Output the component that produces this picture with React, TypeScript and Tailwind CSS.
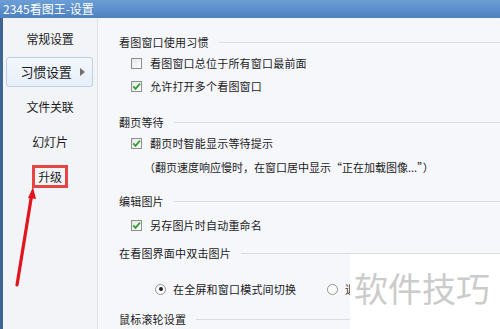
import React from 'react';

const font = { fontFamily: '"Noto Sans CJK SC", "Noto Sans", sans-serif' };

const Check: React.FC<{ checked?: boolean }> = ({ checked }) => (
  <span className="relative w-[11px] h-[11px] border border-[#8e8f8f] bg-gradient-to-br from-[#e6e6e6] to-white shrink-0">
    {checked && (
      <svg viewBox="0 0 11 11" className="absolute -left-px -top-px w-[11px] h-[11px]">
        <path d="M2.3 5.4 L4.5 7.9 L9 2.6" fill="none" stroke="#2f9e2f" strokeWidth="1.7" />
      </svg>
    )}
  </span>
);

const Radio: React.FC<{ on?: boolean }> = ({ on }) => (
  <span className="w-[11px] h-[11px] rounded-full border border-[#8f8f8f] bg-white flex items-center justify-center shrink-0">
    {on && <span className="w-[4px] h-[4px] rounded-full bg-[#222]" />}
  </span>
);

const Header: React.FC<{ text: string; mt: string }> = ({ text, mt }) => (
  <div className={`flex items-center h-[20px] pl-[21px] ${mt}`}>
    <span className="whitespace-nowrap">{text}</span>
    <span className="flex-1 h-px bg-[#d8dce3] ml-[10px]" />
  </div>
);

const Row: React.FC<{ text: string; checked?: boolean; mt: string }> = ({ text, checked, mt }) => (
  <div className={`flex items-center h-[20px] pl-[33px] gap-[8px] ${mt}`}>
    <Check checked={checked} />
    <span className="whitespace-nowrap">{text}</span>
  </div>
);

export default function App() {
  return (
    <div className="relative w-[500px] h-[329px] overflow-hidden text-[11px] tracking-[0.2px] text-[#1b1b1b] bg-[#f6f7fb]" style={font}>
      {/* title bar */}
      <div className="h-[18px] bg-gradient-to-b from-[#6c9ed6] to-[#4d80bf] text-white flex items-center pl-[3px] text-[12px] tracking-normal leading-none">
        2345看图王-设置
      </div>

      <div className="flex h-[311px]">
        <div className="w-[3px] bg-[#3f6594]" />

        {/* sidebar */}
        <div className="w-[94px] bg-[#f2f4f8] flex flex-col items-center pt-[11px] text-[12px] tracking-[-0.2px]">
          <div className="h-[20px] flex items-center">常规设置</div>
          <div className="mt-[8px] h-[30px] w-[87px] ml-[-1px] rounded-[3px] border border-[#bccfe4] bg-gradient-to-b from-[#f4f8fd] to-[#e6eef8] flex items-center justify-center gap-[8px] pl-[6px]">
            <span className="text-[13px]">习惯设置</span>
            <svg viewBox="0 0 5 8" className="w-[5px] h-[8px]">
              <path d="M0 0 L5 4 L0 8 Z" fill="#707070" />
            </svg>
          </div>
          <div className="mt-[10px] h-[20px] flex items-center">文件关联</div>
          <div className="mt-[15px] h-[20px] flex items-center">幻灯片</div>
          <div className="mt-[13px] h-[23px] w-[36px] border-[3px] border-[#e64545] flex items-center justify-center">升级</div>
        </div>

        <div className="w-px bg-[#dde1e8]" />

        {/* content */}
        <div className="flex-1 flex flex-col pt-[14px]">
          <Header text="看图窗口使用习惯" mt="" />
          <Row text="看图窗口总位于所有窗口最前面" mt="mt-[1px]" />
          <Row text="允许打开多个看图窗口" checked mt="mt-[3px]" />
          <Header text="翻页等待" mt="mt-[16px]" />
          <Row text="翻页时智能显示等待提示" checked mt="mt-[1px]" />
          <div className="h-[20px] mt-[4px] flex items-center pl-[46px] whitespace-nowrap tracking-[0px]">
            （翻页速度响应慢时，在窗口居中显示“正在加载图像...”）
          </div>
          <Header text="编辑图片" mt="mt-[14px]" />
          <Row text="另存图片时自动重命名" checked mt="mt-[4px]" />
          <Header text="在看图界面中双击图片" mt="mt-[8px]" />
          <div className="h-[20px] mt-[16px] flex items-center pl-[57px] whitespace-nowrap">
            <Radio on />
            <span className="ml-[7px] w-[124px]">在全屏和窗口模式间切换</span>
            <span className="ml-[30px]"><Radio /></span>
            <span className="ml-[7px] w-[5px] overflow-hidden">退</span>
          </div>
          <Header text="鼠标滚轮设置" mt="mt-[10px]" />
        </div>
      </div>

      {/* red arrow annotation */}
      <svg className="absolute left-0 top-0 w-[500px] h-[329px] pointer-events-none" viewBox="0 0 500 329">
        <line x1="17" y1="285" x2="31.5" y2="196" stroke="#e3141b" strokeWidth="3.2" strokeLinecap="round" />
        <path d="M33 187 L28 198 L36 199 Z" fill="#e3141b" />
      </svg>

      {/* watermark */}
      <div className="absolute left-[350px] top-[254px] right-0 bottom-0 bg-white flex items-start pl-[4px] pt-[17px]">
        <span className="text-[34px] leading-none tracking-normal text-[#cbcbcb]">软件技巧</span>
      </div>
    </div>
  );
}
